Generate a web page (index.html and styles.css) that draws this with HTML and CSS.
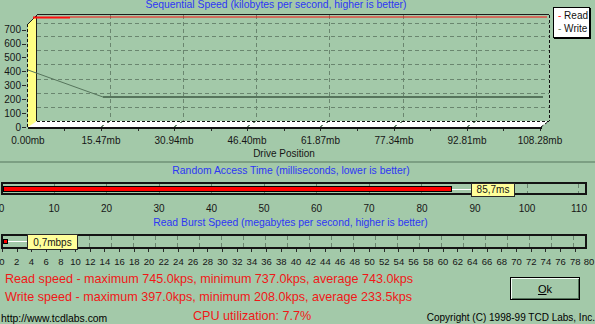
FILE: index.html
```html
<!DOCTYPE html>
<html lang="en">
<head>
    <meta charset="UTF-8">
    <title>Drive Benchmark Results</title>
    <link rel="stylesheet" href="styles.css">
</head>
<body>
    <div class="panel panel-seq">
        <h2 class="title title-seq">Sequential Speed (kilobytes per second, higher is better)</h2>
        <svg class="chart" width="595" height="152" viewBox="0 9 595 152">
            <!-- left wall and floor -->
            <polygon class="wall" points="28,24 37,15 37,121 28,128"/>
            <polygon class="floor" points="28,127 37,121 549,121 541,127"/>
            <!-- back wall grid -->
            <g class="grid">
                <line x1="37" y1="107.5" x2="549" y2="107.5"/>
                <line x1="37" y1="93.5" x2="549" y2="93.5"/>
                <line x1="37" y1="79.5" x2="549" y2="79.5"/>
                <line x1="37" y1="64.5" x2="549" y2="64.5"/>
                <line x1="37" y1="50.5" x2="549" y2="50.5"/>
                <line x1="37" y1="36.5" x2="549" y2="36.5"/>
                <line x1="37" y1="23.5" x2="549" y2="23.5"/>
                <line x1="110.5" y1="15" x2="110.5" y2="121"/>
                <line x1="183.5" y1="15" x2="183.5" y2="121"/>
                <line x1="256.5" y1="15" x2="256.5" y2="121"/>
                <line x1="329.5" y1="15" x2="329.5" y2="121"/>
                <line x1="403.5" y1="15" x2="403.5" y2="121"/>
                <line x1="476.5" y1="15" x2="476.5" y2="121"/>
                <line x1="110" y1="121" x2="101" y2="127"/>
                <line x1="183" y1="121" x2="174" y2="127"/>
                <line x1="256" y1="121" x2="247" y2="127"/>
                <line x1="329" y1="121" x2="320" y2="127"/>
                <line x1="403" y1="121" x2="394" y2="127"/>
                <line x1="476" y1="121" x2="467" y2="127"/>
            </g>
            <g class="edge">
                <line x1="37" y1="14.5" x2="549" y2="14.5"/>
                <line x1="36.5" y1="15" x2="36.5" y2="121"/>
                <line x1="28" y1="24" x2="37" y2="15"/>
            </g>
            <g class="edge-dash">
                <line x1="549.5" y1="15" x2="549.5" y2="121"/>
                <line x1="37" y1="121.5" x2="549" y2="121.5"/>
                <line x1="27.5" y1="24" x2="27.5" y2="128"/>
                <line x1="541" y1="127" x2="549" y2="121"/>
            </g>
            <line class="base" x1="28" y1="128" x2="542" y2="128"/>
            <!-- axis ticks -->
            <g class="ticks">
                <line x1="22" y1="127.5" x2="26" y2="127.5"/>
                <line x1="22" y1="113.5" x2="26" y2="113.5"/>
                <line x1="22" y1="99.5" x2="26" y2="99.5"/>
                <line x1="22" y1="85.5" x2="26" y2="85.5"/>
                <line x1="22" y1="71.5" x2="26" y2="71.5"/>
                <line x1="22" y1="57.5" x2="26" y2="57.5"/>
                <line x1="22" y1="44.5" x2="26" y2="44.5"/>
                <line x1="22" y1="30.5" x2="26" y2="30.5"/>
                <line x1="64.5" y1="129" x2="64.5" y2="131"/>
                <line x1="101.5" y1="129" x2="101.5" y2="131"/>
                <line x1="138.5" y1="129" x2="138.5" y2="131"/>
                <line x1="174.5" y1="129" x2="174.5" y2="131"/>
                <line x1="211.5" y1="129" x2="211.5" y2="131"/>
                <line x1="247.5" y1="129" x2="247.5" y2="131"/>
                <line x1="284.5" y1="129" x2="284.5" y2="131"/>
                <line x1="320.5" y1="129" x2="320.5" y2="131"/>
                <line x1="357.5" y1="129" x2="357.5" y2="131"/>
                <line x1="394.5" y1="129" x2="394.5" y2="131"/>
                <line x1="430.5" y1="129" x2="430.5" y2="131"/>
                <line x1="467.5" y1="129" x2="467.5" y2="131"/>
                <line x1="503.5" y1="129" x2="503.5" y2="131"/>
                <line x1="540.5" y1="129" x2="540.5" y2="131"/>
            </g>
            <!-- data -->
            <line class="read thick" x1="33" y1="17.5" x2="70" y2="17.5"/>
            <line class="read" x1="70" y1="17" x2="547" y2="17"/>
            <line class="write" x1="28" y1="70" x2="103" y2="97"/>
            <line class="write thick" x1="103" y1="97" x2="543" y2="97"/>
            <!-- labels -->
            <g class="ylabels">
                <text x="21" y="130.6">0</text>
                <text x="21" y="116.7">100</text>
                <text x="21" y="102.8">200</text>
                <text x="21" y="88.9">300</text>
                <text x="21" y="75">400</text>
                <text x="21" y="61.1">500</text>
                <text x="21" y="47.2">600</text>
                <text x="21" y="33.3">700</text>
            </g>
            <g class="xlabels">
                <text x="28" y="144.3">0.00mb</text>
                <text x="101" y="144.3">15.47mb</text>
                <text x="174" y="144.3">30.94mb</text>
                <text x="247" y="144.3">46.40mb</text>
                <text x="320.5" y="144.3">61.87mb</text>
                <text x="394" y="144.3">77.34mb</text>
                <text x="467" y="144.3">92.81mb</text>
                <text x="540" y="144.3">108.28mb</text>
                <text x="284" y="157.3">Drive Position</text>
            </g>
        </svg>
        <div class="legend">
            <div><span class="dash-read">-</span> Read</div>
            <div><span class="dash-write">-</span> Write</div>
        </div>
    </div>

    <div class="panel panel-random">
        <h2 class="title title-random">Random Access Time (milliseconds, lower is better)</h2>
        <svg class="chart" width="595" height="39" viewBox="0 177 595 39">
            <g class="grid">
                <line x1="54.5" y1="184" x2="54.5" y2="193"/>
                <line x1="106.5" y1="184" x2="106.5" y2="193"/>
                <line x1="159.5" y1="184" x2="159.5" y2="193"/>
                <line x1="211.5" y1="184" x2="211.5" y2="193"/>
                <line x1="264.5" y1="184" x2="264.5" y2="193"/>
                <line x1="316.5" y1="184" x2="316.5" y2="193"/>
                <line x1="369.5" y1="184" x2="369.5" y2="193"/>
                <line x1="421.5" y1="184" x2="421.5" y2="193"/>
                <line x1="527.5" y1="184" x2="527.5" y2="193"/>
                <line x1="578.5" y1="184" x2="578.5" y2="193"/>
            </g>
            <rect class="frame" x="2" y="183" width="584" height="11"/>
            <rect class="bar" x="3.5" y="186.5" width="448" height="5"/>
            <line class="lead" x1="452" y1="189.5" x2="471" y2="189.5"/>
            <rect class="tag" x="471.5" y="183.5" width="43" height="13"/>
            <text class="tag-text" x="493" y="193.3">85,7ms</text>
            <g class="mlabels">
                <text x="1.5" y="212">0</text>
                <text x="54" y="212">10</text>
                <text x="106.5" y="212">20</text>
                <text x="159" y="212">30</text>
                <text x="211.5" y="212">40</text>
                <text x="264" y="212">50</text>
                <text x="316.5" y="212">60</text>
                <text x="369" y="212">70</text>
                <text x="422" y="212">80</text>
                <text x="475" y="212">90</text>
                <text x="527" y="212">100</text>
                <text x="579" y="212">110</text>
            </g>
        </svg>
    </div>

    <div class="panel panel-burst">
        <h2 class="title title-burst">Read Burst Speed (megabytes per second, higher is better)</h2>
        <svg class="chart" width="595" height="41" viewBox="0 229 595 41">
            <g class="grid">
                <line x1="89.5" y1="236" x2="89.5" y2="247"/>
                <line x1="111.5" y1="236" x2="111.5" y2="247"/>
                <line x1="133.5" y1="236" x2="133.5" y2="247"/>
                <line x1="155.5" y1="236" x2="155.5" y2="247"/>
                <line x1="177.5" y1="236" x2="177.5" y2="247"/>
                <line x1="199.5" y1="236" x2="199.5" y2="247"/>
                <line x1="221.5" y1="236" x2="221.5" y2="247"/>
                <line x1="243.5" y1="236" x2="243.5" y2="247"/>
                <line x1="265.5" y1="236" x2="265.5" y2="247"/>
                <line x1="287.5" y1="236" x2="287.5" y2="247"/>
                <line x1="309.5" y1="236" x2="309.5" y2="247"/>
                <line x1="331.5" y1="236" x2="331.5" y2="247"/>
                <line x1="353.5" y1="236" x2="353.5" y2="247"/>
                <line x1="375.5" y1="236" x2="375.5" y2="247"/>
                <line x1="397.5" y1="236" x2="397.5" y2="247"/>
                <line x1="419.5" y1="236" x2="419.5" y2="247"/>
                <line x1="441.5" y1="236" x2="441.5" y2="247"/>
                <line x1="463.5" y1="236" x2="463.5" y2="247"/>
                <line x1="485.5" y1="236" x2="485.5" y2="247"/>
                <line x1="507.5" y1="236" x2="507.5" y2="247"/>
                <line x1="529.5" y1="236" x2="529.5" y2="247"/>
                <line x1="551.5" y1="236" x2="551.5" y2="247"/>
                <line x1="573.5" y1="236" x2="573.5" y2="247"/>
            </g>
            <rect class="frame" x="2" y="235" width="584" height="13"/>
            <rect class="bar" x="3.5" y="239.5" width="4" height="4"/>
            <line class="lead" x1="8" y1="241.5" x2="27.5" y2="241.5"/>
            <rect class="tag" x="27.5" y="234.5" width="50" height="15"/>
            <text class="tag-text" x="52.5" y="245.5">0,7mbps</text>
            <g class="ticks">
                <line x1="2.5" y1="249" x2="2.5" y2="252"/>
                <line x1="17.5" y1="249" x2="17.5" y2="252"/>
                <line x1="31.5" y1="249" x2="31.5" y2="252"/>
                <line x1="46.5" y1="249" x2="46.5" y2="252"/>
                <line x1="60.5" y1="249" x2="60.5" y2="252"/>
                <line x1="75.5" y1="249" x2="75.5" y2="252"/>
                <line x1="90.5" y1="249" x2="90.5" y2="252"/>
                <line x1="104.5" y1="249" x2="104.5" y2="252"/>
                <line x1="119.5" y1="249" x2="119.5" y2="252"/>
                <line x1="134.5" y1="249" x2="134.5" y2="252"/>
                <line x1="148.5" y1="249" x2="148.5" y2="252"/>
                <line x1="163.5" y1="249" x2="163.5" y2="252"/>
                <line x1="178.5" y1="249" x2="178.5" y2="252"/>
                <line x1="193.5" y1="249" x2="193.5" y2="252"/>
                <line x1="207.5" y1="249" x2="207.5" y2="252"/>
                <line x1="222.5" y1="249" x2="222.5" y2="252"/>
                <line x1="237.5" y1="249" x2="237.5" y2="252"/>
                <line x1="251.5" y1="249" x2="251.5" y2="252"/>
                <line x1="266.5" y1="249" x2="266.5" y2="252"/>
                <line x1="281.5" y1="249" x2="281.5" y2="252"/>
                <line x1="296.5" y1="249" x2="296.5" y2="252"/>
                <line x1="310.5" y1="249" x2="310.5" y2="252"/>
                <line x1="325.5" y1="249" x2="325.5" y2="252"/>
                <line x1="340.5" y1="249" x2="340.5" y2="252"/>
                <line x1="354.5" y1="249" x2="354.5" y2="252"/>
                <line x1="369.5" y1="249" x2="369.5" y2="252"/>
                <line x1="384.5" y1="249" x2="384.5" y2="252"/>
                <line x1="398.5" y1="249" x2="398.5" y2="252"/>
                <line x1="413.5" y1="249" x2="413.5" y2="252"/>
                <line x1="428.5" y1="249" x2="428.5" y2="252"/>
                <line x1="443.5" y1="249" x2="443.5" y2="252"/>
                <line x1="457.5" y1="249" x2="457.5" y2="252"/>
                <line x1="472.5" y1="249" x2="472.5" y2="252"/>
                <line x1="487.5" y1="249" x2="487.5" y2="252"/>
                <line x1="501.5" y1="249" x2="501.5" y2="252"/>
                <line x1="516.5" y1="249" x2="516.5" y2="252"/>
                <line x1="531.5" y1="249" x2="531.5" y2="252"/>
                <line x1="545.5" y1="249" x2="545.5" y2="252"/>
                <line x1="560.5" y1="249" x2="560.5" y2="252"/>
                <line x1="575.5" y1="249" x2="575.5" y2="252"/>
            </g>
            <g class="blabels">
                <text x="2" y="264.5">0</text>
                <text x="16.7" y="264.5">2</text>
                <text x="31.4" y="264.5">4</text>
                <text x="46.1" y="264.5">6</text>
                <text x="60.8" y="264.5">8</text>
                <text x="75.5" y="264.5">10</text>
                <text x="90.2" y="264.5">12</text>
                <text x="104.9" y="264.5">14</text>
                <text x="119.6" y="264.5">16</text>
                <text x="134.3" y="264.5">18</text>
                <text x="149" y="264.5">20</text>
                <text x="163.7" y="264.5">22</text>
                <text x="178.4" y="264.5">24</text>
                <text x="193.1" y="264.5">26</text>
                <text x="207.8" y="264.5">28</text>
                <text x="222.5" y="264.5">30</text>
                <text x="237.2" y="264.5">32</text>
                <text x="251.9" y="264.5">34</text>
                <text x="266.6" y="264.5">36</text>
                <text x="281.3" y="264.5">38</text>
                <text x="296" y="264.5">40</text>
                <text x="310.7" y="264.5">42</text>
                <text x="325.4" y="264.5">44</text>
                <text x="340.1" y="264.5">46</text>
                <text x="354.8" y="264.5">48</text>
                <text x="369.5" y="264.5">50</text>
                <text x="384.2" y="264.5">52</text>
                <text x="398.9" y="264.5">54</text>
                <text x="413.6" y="264.5">56</text>
                <text x="428.3" y="264.5">58</text>
                <text x="443" y="264.5">60</text>
                <text x="457.7" y="264.5">62</text>
                <text x="472.4" y="264.5">64</text>
                <text x="487.1" y="264.5">66</text>
                <text x="501.8" y="264.5">68</text>
                <text x="516.5" y="264.5">70</text>
                <text x="531.2" y="264.5">72</text>
                <text x="545.9" y="264.5">74</text>
                <text x="560.6" y="264.5">76</text>
                <text x="575.3" y="264.5">78</text>
                <text x="589" y="264.5">80</text>
            </g>
        </svg>
    </div>

    <div class="footer">
        <div class="footer-top">
            <div class="stats">
                <p>Read speed - maximum 745.0kps, minimum 737.0kps, average 743.0kps</p>
                <p>Write speed - maximum 397.0kps, minimum 208.0kps, average 233.5kps</p>
            </div>
            <button class="ok"><span class="key">O</span>k</button>
        </div>
        <div class="footer-bottom">
            <span class="site">http://www.tcdlabs.com</span>
            <span class="cpu">CPU utilization: 7.7%</span>
            <span class="copy">Copyright (C) 1998-99 TCD Labs, Inc.</span>
        </div>
    </div>
</body>
</html>
```

FILE: styles.css
```css
body {
    margin: 0;
    padding: 0;
    width: 595px;
    height: 324px;
    overflow: hidden;
    font-family: "Liberation Sans", Arial, sans-serif;
    background-color: #a3c9a9;
}
.panel {
    position: relative;
}
.panel-seq {
    height: 161px;
    border-bottom: 2px solid #7c9f83;
}
.panel-random {
    padding-top: 2px;
}
.panel-burst {
    padding-top: 1px;
}
.title {
    margin: 0;
    font-size: 10.4px;
    font-weight: normal;
    line-height: 12px;
    height: 12px;
    color: #2d36f5;
    text-align: center;
    white-space: nowrap;
}
.title-seq {
    line-height: 10px;
    height: 9px;
    padding-right: 43px;
}
.title-random {
    padding-right: 13px;
}
.title-burst {
    padding-right: 14px;
}
.chart {
    display: block;
}
.chart text {
    font-family: "Liberation Sans", Arial, sans-serif;
    font-size: 10px;
    fill: #161616;
}

/* 3d sequential chart */
.wall {
    fill: #ffff84;
}
.floor {
    fill: #ffffff;
}
.grid line {
    stroke: #6a866f;
    stroke-width: 1;
    stroke-dasharray: 4 3;
    shape-rendering: crispEdges;
}
.edge line {
    stroke: #1c1c1c;
    stroke-width: 1;
}
.edge-dash line {
    stroke: #111;
    stroke-width: 1;
    stroke-dasharray: 3 2;
}
.base {
    stroke: #111;
    stroke-width: 2;
}
.ticks line {
    stroke: #2a2a2a;
    stroke-width: 1;
    shape-rendering: crispEdges;
}
.read {
    stroke: #ff1010;
    stroke-width: 1;
}
.write {
    stroke: #56755c;
    stroke-width: 1;
}
.thick {
    stroke-width: 2;
}
.ylabels text {
    text-anchor: end;
}
.xlabels text,
.mlabels text,
.blabels text,
.tag-text {
    text-anchor: middle;
}
.blabels text {
    font-size: 9.5px;
}

.legend {
    position: absolute;
    left: 553px;
    top: 7px;
    width: 37px;
    height: 31px;
    box-sizing: border-box;
    padding: 1px 0 0 4px;
    background-color: #fff;
    border: 1px solid #000;
    box-shadow: 1px 1px 0 #000;
    font-size: 10px;
    line-height: 13px;
    color: #111;
    white-space: nowrap;
}
.dash-read {
    color: #ff1010;
}
.dash-write {
    color: #56755c;
}

/* meters */
.frame {
    fill: none;
    stroke: #141414;
    stroke-width: 2;
}
.bar {
    fill: #ff0000;
    stroke: #000;
    stroke-width: 1;
}
.lead {
    stroke: #fff;
    stroke-width: 1;
}
.tag {
    fill: #ffff9a;
    stroke: #2a2a2a;
    stroke-width: 1;
}

/* results */
.footer-top {
    display: flex;
}
.stats {
    padding-left: 5px;
    color: #f01818;
    font-size: 12.6px;
    line-height: 18.4px;
    white-space: nowrap;
}
.stats p {
    margin: 0;
}
.ok {
    margin: 7px 15px 0 auto;
    width: 70px;
    height: 23px;
    padding: 0;
    font-family: "Liberation Sans", Arial, sans-serif;
    font-size: 11px;
    color: #000;
    background-color: transparent;
    border: 1px solid #000;
    box-shadow: inset 1px 1px 0 #f4fff6, inset -1px -1px 0 #54725a;
}
.key {
    text-decoration: underline;
}
.footer-bottom {
    display: flex;
    align-items: flex-end;
    height: 18.4px;
    white-space: nowrap;
}
.site {
    width: 192px;
    padding-left: 1px;
    font-size: 10.4px;
    line-height: 12px;
    color: #000;
}
.cpu {
    color: #f01818;
    font-size: 12.6px;
    line-height: 18.4px;
}
.copy {
    margin-left: auto;
    margin-bottom: 1px;
    font-size: 10px;
    line-height: 12px;
    color: #000;
}
```
